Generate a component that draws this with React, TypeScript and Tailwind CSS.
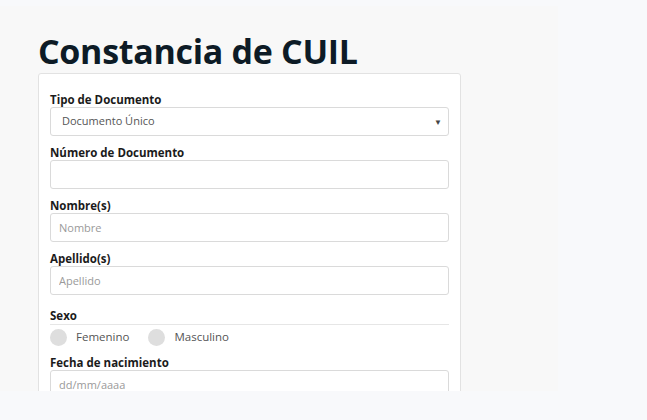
import React from "react";

const font = { fontFamily: '"Open Sans", "Noto Sans", sans-serif' };

function Label({ children }: { children: React.ReactNode }) {
  return (
    <label className="block text-[11.5px] leading-[14px] font-bold text-[#1b1b1b]">
      {children}
    </label>
  );
}

function TextField({ placeholder }: { placeholder?: string }) {
  return (
    <input
      className="block h-[29px] w-full rounded-[3px] border border-[#dadada] bg-white px-[8px] text-[11px] text-[#555] placeholder:text-[#9a9a9a] outline-none"
      placeholder={placeholder}
      style={font}
    />
  );
}

export default function App() {
  return (
    <div className="h-[420px] w-full overflow-hidden bg-[#f8f9fb] pt-[6px]" style={font}>
      <div className="h-[385px] w-[558px] overflow-hidden bg-[#f8f8f8] pl-[38px]">
        <h1 className="pt-[26px] text-[34px] leading-[38px] font-bold tracking-[-0.3px] text-[#0d1b26]">
          Constancia de CUIL
        </h1>
        <div className="mt-[3px] w-[423px] rounded-[3px] border border-[#e2e2e2] bg-white px-[11px] pt-[19px] pb-6">
          <Label>Tipo de Documento</Label>
          <div className="relative mb-[10px] flex h-[29px] items-center rounded-[3px] border border-[#dadada] bg-white pl-[11px] text-[11px] text-[#555]">
            Documento Único
            <span className="absolute right-[6px] top-[8px] text-[8px] text-[#444]">▼</span>
          </div>

          <Label>Número de Documento</Label>
          <div className="mb-[10px]">
            <TextField />
          </div>

          <Label>Nombre(s)</Label>
          <div className="mb-[10px]">
            <TextField placeholder="Nombre" />
          </div>

          <Label>Apellido(s)</Label>
          <div className="mb-[14px]">
            <TextField placeholder="Apellido" />
          </div>

          <div className="border-b border-[#e6e6e6] pb-[1px]">
            <Label>Sexo</Label>
          </div>
          <div className="mb-[7px] flex h-[24px] items-center text-[11.5px] text-[#555]">
            <span className="h-[17px] w-[17px] rounded-full bg-[#dedede]" />
            <span className="ml-[9px]">Femenino</span>
            <span className="ml-[19px] h-[17px] w-[17px] rounded-full bg-[#dedede]" />
            <span className="ml-[9px]">Masculino</span>
          </div>

          <Label>Fecha de nacimiento</Label>
          <TextField placeholder="dd/mm/aaaa" />
        </div>
      </div>
    </div>
  );
}
